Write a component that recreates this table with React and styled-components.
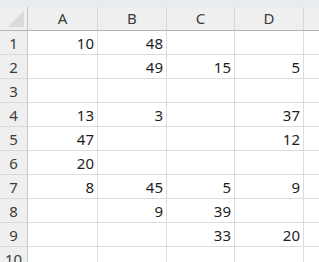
import React from "react";
import styled, { createGlobalStyle } from "styled-components";

const Global = createGlobalStyle`
  html, body { margin: 0; padding: 0; background: #ffffff; overflow: hidden; }
  body { font-family: "Noto Sans", "Open Sans", Arial, sans-serif; }
`;

const Sheet = styled.div`
  display: flex;
  flex-direction: column;
  width: 319px;
  height: 262px;
  overflow: hidden;
  background: #ffffff;
`;

const TopStrip = styled.div`
  height: 7px;
  background: #e8ecef;
  flex: none;
`;

const Grid = styled.div`
  display: grid;
  grid-template-columns: 28px 70px 69px 68px 69px 40px;
  grid-auto-rows: 24px;
  grid-template-rows: 24px;
`;

const Corner = styled.div`
  position: relative;
  background: #efefef;
  border-right: 1px solid #c6c6c6;
  border-bottom: 1px solid #b4b4b4;
`;

const CornerMark = styled.svg`
  position: absolute;
  left: 8px;
  top: 4px;
`;

const ColHead = styled.div`
  display: flex;
  align-items: center;
  justify-content: center;
  background: #efefef;
  border-right: 1px solid #d6d6d6;
  border-bottom: 1px solid #b4b4b4;
  color: #3b3b3b;
  font-size: 15px;
  padding-bottom: 1px;
`;

const RowHead = styled.div`
  display: flex;
  align-items: center;
  justify-content: center;
  background: #efefef;
  border-right: 1px solid #c6c6c6;
  border-bottom: 1px solid #dadada;
  color: #3b3b3b;
  font-size: 15px;
`;

const Cell = styled.div`
  display: flex;
  align-items: center;
  justify-content: flex-end;
  padding-right: 3px;
  border-right: 1px solid #dcdcdc;
  border-bottom: 1px solid #dcdcdc;
  color: #1e1e1e;
  font-size: 15px;
`;

const columns = ["A", "B", "C", "D", ""];

const rows = [
  [10, 48, null, null],
  [null, 49, 15, 5],
  [null, null, null, null],
  [13, 3, null, 37],
  [47, null, null, 12],
  [20, null, null, null],
  [8, 45, 5, 9],
  [null, 9, 39, null],
  [null, null, 33, 20],
  [null, null, null, null],
];

export default function App() {
  return (
    <Sheet>
      <Global />
      <TopStrip />
      <Grid>
        <Corner>
          <CornerMark width="17" height="17" viewBox="0 0 17 17">
            <polygon points="16,0 16,16 0,16" fill="#dadada" />
          </CornerMark>
        </Corner>
        {columns.map((c, i) => (
          <ColHead key={i}>{c}</ColHead>
        ))}
        {rows.map((r, ri) => (
          <React.Fragment key={ri}>
            <RowHead>{ri + 1}</RowHead>
            {r.map((v, ci) => (
              <Cell key={ci}>{v ?? ""}</Cell>
            ))}
            <Cell />
          </React.Fragment>
        ))}
      </Grid>
    </Sheet>
  );
}
